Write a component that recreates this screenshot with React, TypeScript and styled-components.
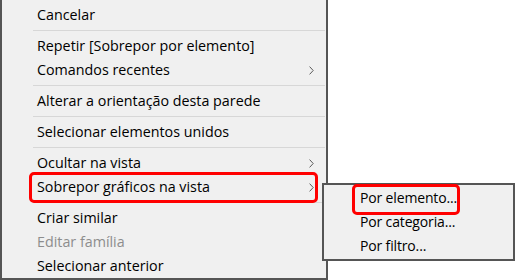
import React from "react";
import styled, { createGlobalStyle } from "styled-components";

const Global = createGlobalStyle`
  html, body { margin: 0; padding: 0; background: #ffffff; }
  body { font-family: "Open Sans", "Noto Sans", sans-serif; }
`;

const Stage = styled.div`
  position: relative;
  width: 520px;
  height: 280px;
  overflow: hidden;
  background: #ffffff;
`;

const Menu = styled.div`
  width: 324px;
  background: #f0f0f0;
  border: 2px solid #555555;
  border-top: none;
  padding-top: 3px;
  display: flex;
  flex-direction: column;
`;

const SubMenu = styled.div`
  position: absolute;
  left: 322px;
  top: 183px;
  width: 193px;
  height: 78px;
  box-sizing: border-box;
  background: #f0f0f0;
  border: 2px solid #555555;
  padding: 1px 0;
  display: flex;
  flex-direction: column;
`;

const Item = styled.div<{ $disabled?: boolean; $indent: number; $compact?: boolean }>`
  position: relative;
  height: 24px;
  display: flex;
  align-items: center;
  padding-left: ${(p) => p.$indent}px;
  font-size: ${(p) => (p.$compact ? "14px" : "14.3px")};
  letter-spacing: ${(p) => (p.$compact ? "-0.15px" : "0")};
  line-height: 24px;
  color: ${(p) => (p.$disabled ? "#8d8d8d" : "#000000")};
  white-space: nowrap;
`;

const Separator = styled.div`
  height: 1px;
  margin: 3px 1px 3px 31px;
  background: #d7d7d7;
`;

const Chevron = styled.svg`
  margin-left: auto;
  margin-right: 12px;
  width: 5px;
  height: 9px;
  flex: none;
`;

const Highlight = styled.div<{ $left: number; $top: number; $w: number; $h: number }>`
  position: absolute;
  left: ${(p) => p.$left}px;
  top: ${(p) => p.$top}px;
  width: ${(p) => p.$w}px;
  height: ${(p) => p.$h}px;
  box-sizing: border-box;
  border: 3px solid #ff0000;
  border-radius: 5px;
  pointer-events: none;
`;

const Arrow = () => (
  <Chevron viewBox="0 0 5 9">
    <path d="M0.6 0.6 L4.2 4.5 L0.6 8.4" fill="none" stroke="#5a5a5a" strokeWidth="1" />
  </Chevron>
);

export default function App() {
  return (
    <Stage>
      <Global />
      <Menu>
        <Item $indent={35}>Cancelar</Item>
        <Separator />
        <Item $indent={35}>Repetir [Sobrepor por elemento]</Item>
        <Item $indent={35}>
          Comandos recentes
          <Arrow />
        </Item>
        <Separator />
        <Item $indent={35}>Alterar a orientação desta parede</Item>
        <Separator />
        <Item $indent={35}>Selecionar elementos unidos</Item>
        <Separator />
        <Item $indent={35}>
          Ocultar na vista
          <Arrow />
        </Item>
        <Item $indent={35}>
          Sobrepor gráficos na vista
          <Arrow />
          <Highlight $left={27} $top={-3} $w={289} $h={31} />
        </Item>
        <Separator />
        <Item $indent={35}>Criar similar</Item>
        <Item $indent={35} $disabled>
          Editar família
        </Item>
        <Item $indent={35}>Selecionar anterior</Item>
      </Menu>
      <SubMenu>
        <Item $indent={36} $compact>
          Por elemento...
          <Highlight $left={28} $top={-2} $w={108} $h={31} />
        </Item>
        <Item $indent={36} $compact>
          Por categoria...
        </Item>
        <Item $indent={36} $compact>
          Por filtro...
        </Item>
      </SubMenu>
    </Stage>
  );
}
